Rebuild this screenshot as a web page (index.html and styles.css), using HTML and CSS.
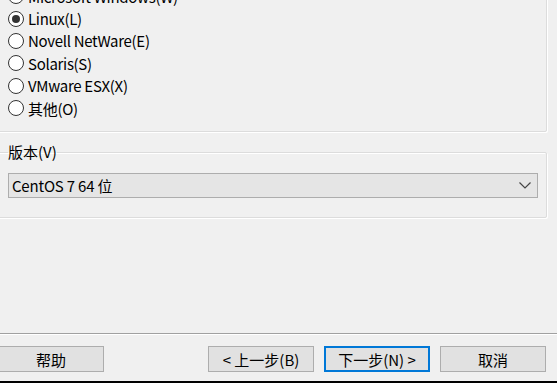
FILE: index.html
```html
<!DOCTYPE html>
<html>
<head>
    <title>新建虚拟机向导 - 客户机操作系统</title>
    <link rel="stylesheet" href="styles.css">
</head>
<body>
    <div class="dialog">
        <div class="os-group">
            <label class="radio"><span class="dot"></span>Microsoft Windows(W)</label>
            <label class="radio"><span class="dot checked"></span>Linux(L)</label>
            <label class="radio"><span class="dot"></span>Novell NetWare(E)</label>
            <label class="radio"><span class="dot"></span>Solaris(S)</label>
            <label class="radio"><span class="dot"></span>VMware ESX(X)</label>
            <label class="radio"><span class="dot"></span>其他(O)</label>
        </div>
        <fieldset class="version-group">
            <legend>版本(V)</legend>
            <div class="combo">
                <span>CentOS 7 64 位</span>
                <svg width="12" height="7" viewBox="0 0 12 7"><polyline points="0.5,0.5 6,6 11.5,0.5" fill="none" stroke="#444" stroke-width="1.2"/></svg>
            </div>
        </fieldset>
        <div class="spacer"></div>
        <div class="button-bar">
            <button class="btn help">帮助</button>
            <button class="btn">&lt; 上一步(B)</button>
            <button class="btn default">下一步(N) &gt;</button>
            <button class="btn">取消</button>
        </div>
    </div>
</body>
</html>
```

FILE: styles.css
```css
html, body {
    margin: 0;
    height: 100%;
}
body {
    background-color: #f0f0f0;
    color: #000000;
    font-family: "Noto Sans CJK SC", "Noto Sans", sans-serif;
    font-size: 15px;
    overflow: hidden;
}
.dialog {
    margin-left: -8px;
    width: 565px;
    height: 383px;
    display: flex;
    flex-direction: column;
    border-bottom: 2px solid #000000;
    box-sizing: border-box;
}
.os-group {
    margin-top: -16px;
    width: 555px;
    height: 148px;
    flex-shrink: 0;
    box-sizing: border-box;
    border: 1px solid #dcdcdc;
    box-shadow: inset 1px 1px #ffffff, 1px 1px #ffffff;
    border-radius: 2px;
    padding-left: 15px;
    display: flex;
    flex-direction: column;
}
.radio {
    height: 22.4px;
    flex-shrink: 0;
    display: flex;
    align-items: center;
    gap: 4px;
    white-space: nowrap;
    letter-spacing: -0.3px;
}
.dot {
    width: 16px;
    height: 16px;
    box-sizing: border-box;
    border: 1px solid #333333;
    border-radius: 50%;
    background-color: #ffffff;
    display: flex;
    align-items: center;
    justify-content: center;
}
.dot.checked::after {
    content: "";
    width: 8px;
    height: 8px;
    border-radius: 50%;
    background-color: #333333;
}
.version-group {
    margin: 10px 0 0 0;
    width: 555px;
    height: 76px;
    flex-shrink: 0;
    box-sizing: border-box;
    padding: 0 0 0 15px;
    border: 1px solid #dcdcdc;
    box-shadow: inset 1px 1px #ffffff, 1px 1px #ffffff;
    border-radius: 2px;
}
.version-group legend {
    padding: 0;
    margin-left: 0;
    line-height: 20px;
}
.combo {
    margin-top: 11px;
    width: 530px;
    height: 25px;
    box-sizing: border-box;
    border: 1px solid #adadad;
    background-color: #e5e5e5;
    display: flex;
    align-items: center;
    justify-content: space-between;
    padding: 0 6px 0 3px;
    letter-spacing: -0.2px;
}
.spacer {
    flex: 1;
    border-bottom: 1px solid #a0a0a0;
    box-shadow: 0 1px #ffffff;
    margin-bottom: 12px;
}
.button-bar {
    display: flex;
    gap: 10px;
    height: 26px;
    margin-bottom: 9px;
}
.btn {
    width: 106px;
    height: 26px;
    box-sizing: border-box;
    border: 1px solid #adadad;
    background-color: #e1e1e1;
    font-family: inherit;
    font-size: 15px;
    color: #000000;
    padding: 0;
}
.btn.help {
    margin-left: 6px;
    margin-right: 94px;
}
.btn.default {
    border: 2px solid #0078d7;
}
```
